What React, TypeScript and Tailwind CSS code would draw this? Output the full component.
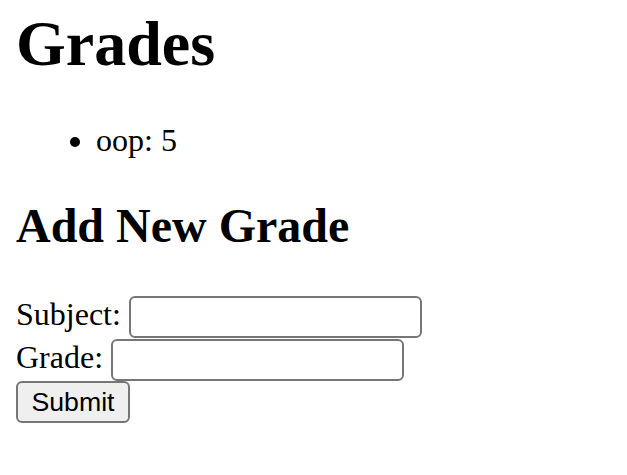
import { useState } from 'react';

type Grade = { subject: string; grade: number };

const serif = "font-['Liberation_Serif','Times_New_Roman',serif]";

export default function App() {
  const [grades] = useState<Grade[]>([{ subject: 'oop', grade: 5 }]);
  const [subject, setSubject] = useState('');
  const [grade, setGrade] = useState('');

  return (
    <div className={`min-h-[475px] bg-white px-4 pt-[7px] text-black ${serif}`}>
      <h1 className="text-[64px] font-bold leading-[74px]">Grades</h1>

      <ul className="mt-[41px] list-disc pl-[80px]">
        {grades.map((g) => (
          <li key={g.subject} className="text-[32px] leading-[37px]">
            {g.subject}: {g.grade}
          </li>
        ))}
      </ul>

      <h2 className="mt-[39px] text-[48px] font-bold leading-[55px]">Add New Grade</h2>

      <form className="mt-[42px] flex flex-col" onSubmit={(e) => e.preventDefault()}>
        <div className="flex h-[43px] items-center gap-2">
          <label className="mb-[4px] text-[32px] leading-[37px]">Subject:</label>
          <input
            value={subject}
            onChange={(e) => setSubject(e.target.value)}
            className="h-[42px] w-[293px] rounded-[6px] border-2 border-[#767676] bg-white"
          />
        </div>
        <div className="flex h-[43px] items-center gap-2">
          <label className="mb-[4px] text-[32px] leading-[37px]">Grade:</label>
          <input
            value={grade}
            onChange={(e) => setGrade(e.target.value)}
            className="h-[42px] w-[293px] rounded-[6px] border-2 border-[#767676] bg-white"
          />
        </div>
        <div className="flex">
          <button
            type="submit"
            className="h-[42px] w-[114px] rounded-[6px] border-2 border-[#767676] bg-[#efefef] font-['Liberation_Sans',Arial,sans-serif] text-[26.7px] leading-none text-black"
          >
            Submit
          </button>
        </div>
      </form>
    </div>
  );
}
